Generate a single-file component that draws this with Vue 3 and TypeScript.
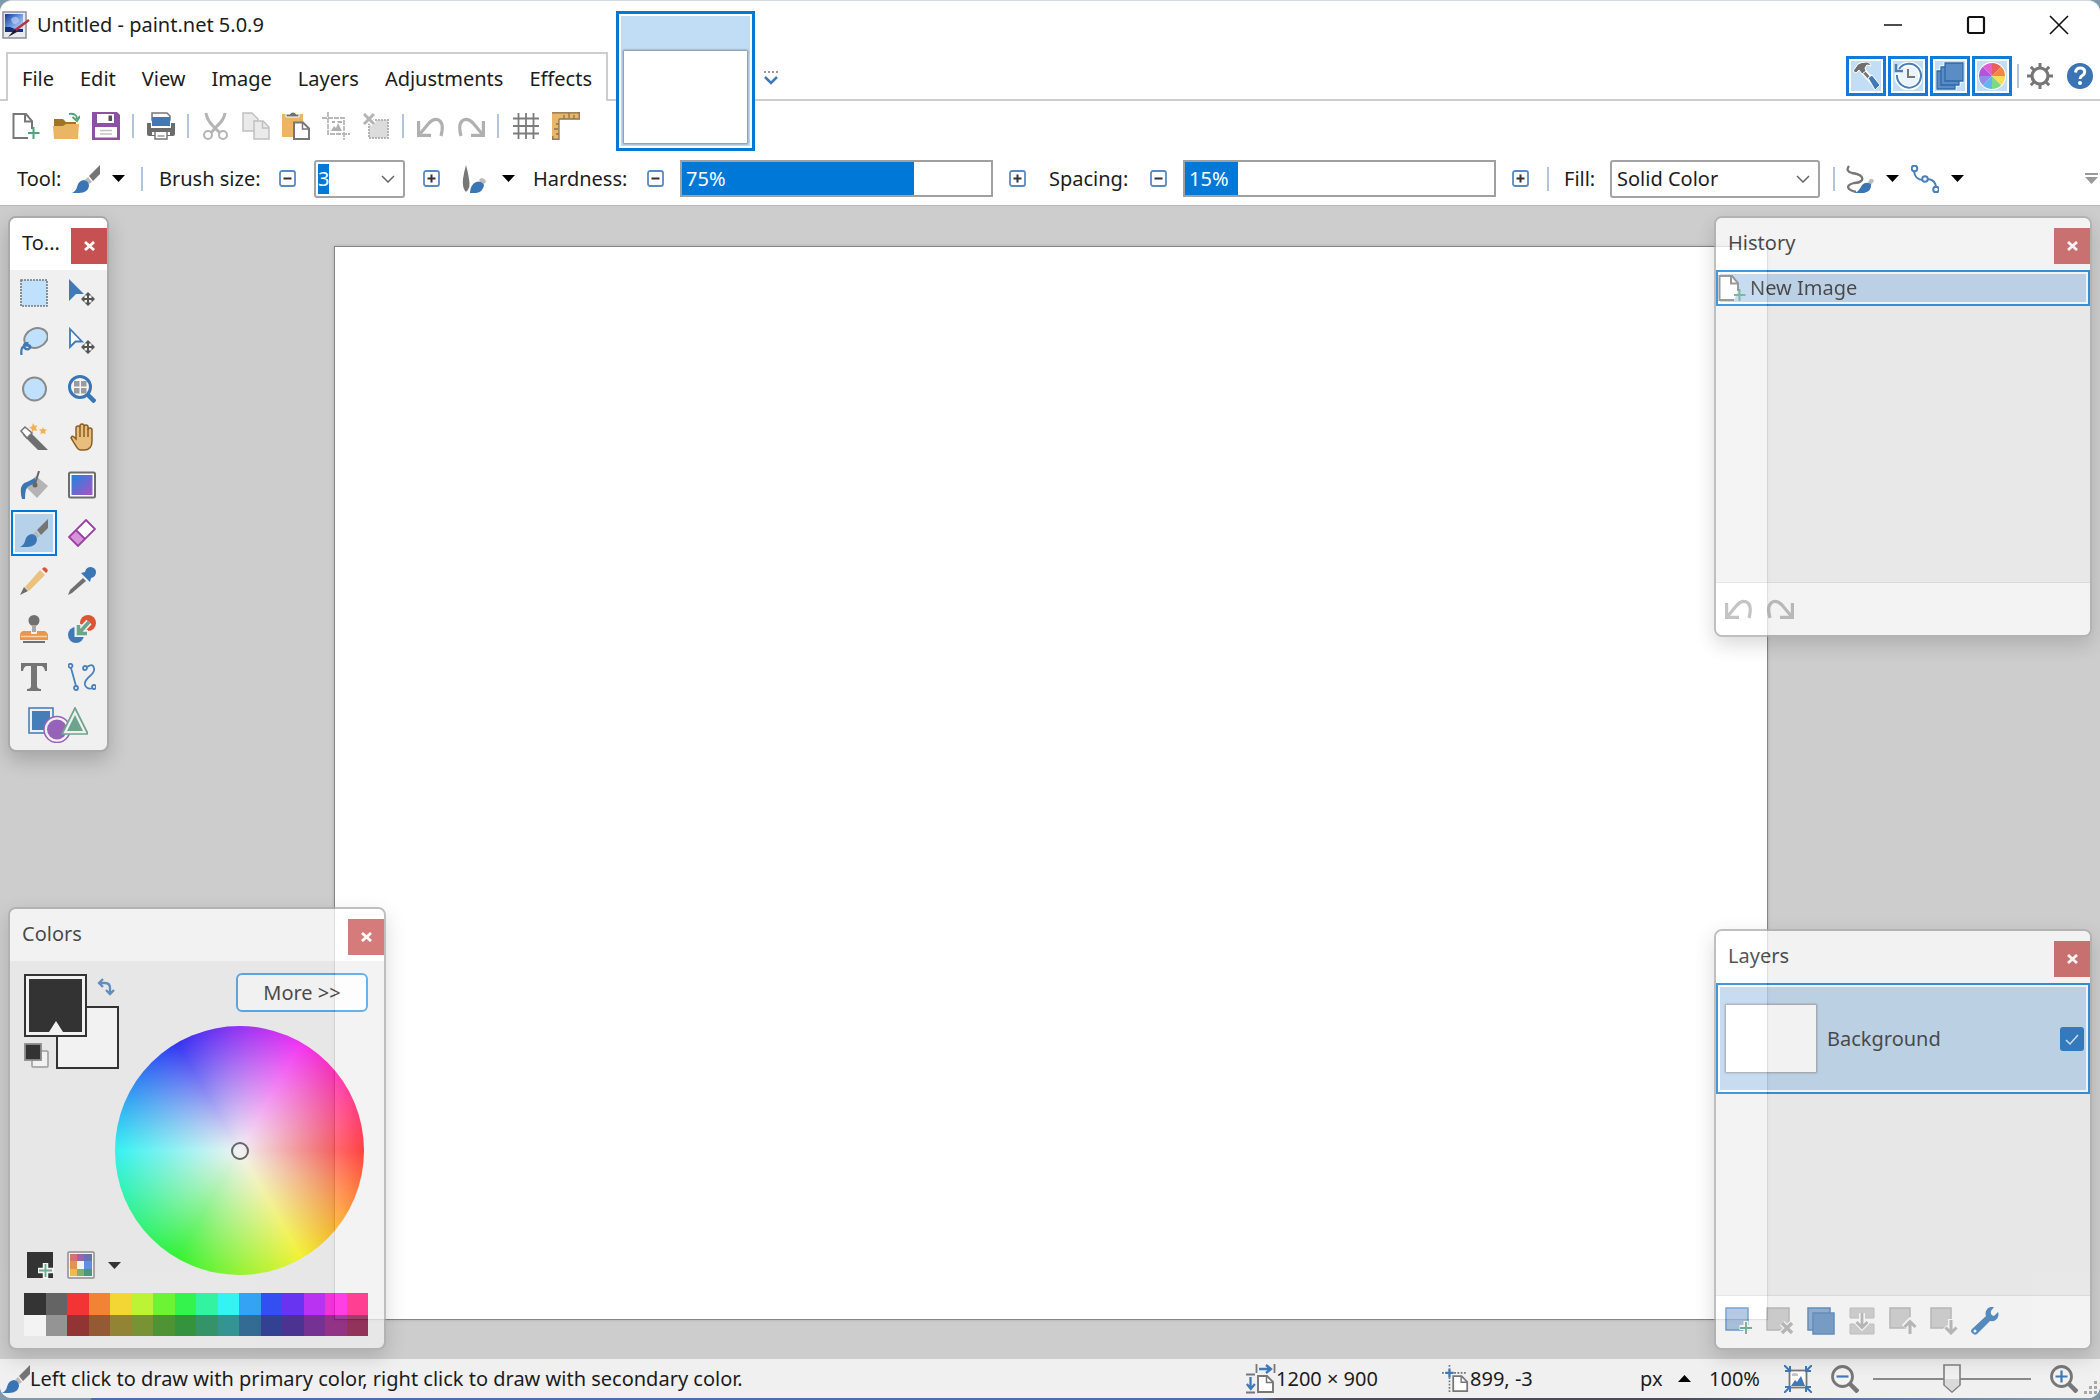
<script setup lang="ts">
import { onMounted, ref } from 'vue'

const menus = ['File', 'Edit', 'View', 'Image', 'Layers', 'Adjustments', 'Effects']

interface Action { icon: string; label: string }

const toolbarGroups: Action[][] = [
  [{ icon: 'new', label: 'New' }, { icon: 'open', label: 'Open' }, { icon: 'save', label: 'Save' }],
  [{ icon: 'print', label: 'Print' }],
  [
    { icon: 'cut', label: 'Cut' },
    { icon: 'copy', label: 'Copy' },
    { icon: 'paste', label: 'Paste' },
    { icon: 'crop', label: 'Crop to Selection' },
    { icon: 'deselect', label: 'Deselect' },
  ],
  [{ icon: 'undo', label: 'Undo' }, { icon: 'redo', label: 'Redo' }],
  [{ icon: 'grid', label: 'Pixel Grid' }, { icon: 'ruler', label: 'Rulers' }],
]

const windowToggles: Action[] = [
  { icon: 'hammer', label: 'Tools window' },
  { icon: 'clock', label: 'History window' },
  { icon: 'stack', label: 'Layers window' },
  { icon: 'wheel', label: 'Colors window' },
]

const tools: Action[] = [
  { icon: 'rect-select', label: 'Rectangle Select' },
  { icon: 'move-pixels', label: 'Move Selected Pixels' },
  { icon: 'lasso', label: 'Lasso Select' },
  { icon: 'move-selection', label: 'Move Selection' },
  { icon: 'ellipse-select', label: 'Ellipse Select' },
  { icon: 'zoom-tool', label: 'Zoom' },
  { icon: 'wand', label: 'Magic Wand' },
  { icon: 'pan', label: 'Pan' },
  { icon: 'bucket', label: 'Paint Bucket' },
  { icon: 'gradient', label: 'Gradient' },
  { icon: 'brush', label: 'Paintbrush' },
  { icon: 'eraser', label: 'Eraser' },
  { icon: 'pencil', label: 'Pencil' },
  { icon: 'picker', label: 'Color Picker' },
  { icon: 'stamp', label: 'Clone Stamp' },
  { icon: 'recolor', label: 'Recolor' },
  { icon: 'text', label: 'Text' },
  { icon: 'curve', label: 'Line / Curve' },
]
const activeTool = ref('brush')

const layerActions: Action[] = [
  { icon: 'layer-add', label: 'Add New Layer' },
  { icon: 'layer-delete', label: 'Delete Layer' },
  { icon: 'layer-duplicate', label: 'Duplicate Layer' },
  { icon: 'layer-merge', label: 'Merge Layer Down' },
  { icon: 'layer-up', label: 'Move Layer Up' },
  { icon: 'layer-down', label: 'Move Layer Down' },
  { icon: 'wrench', label: 'Properties' },
]

const palette = [
  '#000000', '#404040', '#ff0000', '#ff6a00', '#ffd800', '#b6ff00', '#4cff00', '#00ff21',
  '#00ff90', '#00ffff', '#0094ff', '#0026ff', '#4800ff', '#b200ff', '#ff00dc', '#ff006e',
  '#ffffff', '#808080', '#7f0000', '#7f3300', '#7f6a00', '#5b7f00', '#267f00', '#007f0e',
  '#007f46', '#007f7f', '#004a7f', '#00137f', '#21007f', '#57007f', '#7f006e', '#7f0037',
]

const brushSize = ref('3')
const hardness = ref(75)
const spacing = ref(15)
const zoom = ref(50)
const layerVisible = ref(true)
const sizeInput = ref<HTMLInputElement | null>(null)

onMounted(() => {
  sizeInput.value?.focus()
  sizeInput.value?.select()
})
</script>

<template>
  <svg class="sprite" width="0" height="0" aria-hidden="true">
    <defs>
      <linearGradient id="g-tool" x1="0" y1="0" x2="1" y2="1">
        <stop offset="0" stop-color="#1b86e0" /><stop offset="1" stop-color="#b04fc4" />
      </linearGradient>
      <linearGradient id="g-app" x1="0" y1="0" x2="1" y2="1">
        <stop offset="0" stop-color="#123a9c" /><stop offset=".5" stop-color="#6f9be0" /><stop offset="1" stop-color="#dfe9fa" />
      </linearGradient>
    </defs>

    <symbol id="i-app" viewBox="0 0 28 28">
      <rect x="1" y="1" width="23" height="26" fill="#e9eaf0" stroke="#8d8d98" stroke-width="1.5" />
      <rect x="3" y="3" width="18" height="18" fill="url(#g-app)" />
      <path d="M9 8q4-4 7-1t-2 6q-4 1-5-5z" fill="#c3d9f5" opacity=".6" />
      <path d="M3 16h5l5 2h8v3H3z" fill="#16307c" />
      <path d="M27 9 12 20" stroke="#b3343f" stroke-width="2.4" />
      <path d="M13 18 6 26l9-5z" fill="#1d1d28" />
    </symbol>

    <symbol id="i-new" viewBox="0 0 28 28">
      <path d="M16 26H1.500V2H14l6 7v8" fill="#fff" stroke="#777" stroke-width="2" />
      <path d="M13 2v7.500h7" fill="none" stroke="#777" stroke-width="2" />
      <path d="M21.500 15v12M16 21h11.500" stroke="#4da37c" stroke-width="2" />
    </symbol>
    <symbol id="i-open" viewBox="0 0 28 28">
      <path d="M2 7h9l3 3h10v7H2z" fill="#a07427" />
      <path d="M1 14h10l3-2h13l-1 15H2z" fill="#ebb663" />
      <path d="M17 2q8-1 8 5M20.500 5l4.500 4 3-5" fill="none" stroke="#4da37c" stroke-width="2" />
    </symbol>
    <symbol id="i-save" viewBox="0 0 28 28">
      <path d="M0 0h25l3 3v25H0z" fill="#8c50a4" />
      <path d="M5 2h17v9H5zM3 15h22v10.500H3z" fill="#fff" />
      <rect x="16.500" y="3.500" width="3.500" height="5.500" fill="#555" />
      <path d="M8 18.500h12M8 22h12" stroke="#c4c4c4" stroke-width="1.500" />
    </symbol>
    <symbol id="i-print" viewBox="0 0 28 28">
      <path d="M6 1h14l3 3v4H5V1z" fill="#fff" stroke="#777" stroke-width="1.500" />
      <rect x="5" y="5" width="18" height="9" fill="#3f79b7" />
      <path d="M0 11h4v5h20v-5h4v11q0 2-2 2H2q-2 0-2-2z" fill="#6c6c6c" />
      <rect x="5" y="20" width="18" height="3" fill="#fff" />
      <path d="M8 20v7h12v-7" fill="#fff" stroke="#777" stroke-width="1.500" />
      <path d="M10.500 24h7" stroke="#999" stroke-width="1.500" />
    </symbol>
    <symbol id="i-cut" viewBox="0 0 28 28">
      <path d="M4 1q1 7 7 13l8 8M23 1q-1 7-8 13l-7 8" fill="none" stroke="#b4b4b4" stroke-width="3" />
      <circle cx="6" cy="23" r="4" fill="#fff" stroke="#b4b4b4" stroke-width="2" />
      <circle cx="21" cy="23" r="4" fill="#fff" stroke="#b4b4b4" stroke-width="2" />
    </symbol>
    <symbol id="i-copy" viewBox="0 0 28 28">
      <path d="M1 1h9l6 6v12H1z" fill="#eaeaea" stroke="#c0c0c0" stroke-width="1.500" />
      <path d="M12 9h9l6 6v12H12z" fill="#eaeaea" stroke="#c0c0c0" stroke-width="1.500" />
      <path d="M20.500 9v7H27" fill="none" stroke="#c0c0c0" stroke-width="1.500" />
    </symbol>
    <symbol id="i-paste" viewBox="0 0 28 28">
      <path d="M0 2h21v23H0z" fill="#ebb663" />
      <path d="M4 5V2h4q0-2 3-2t3 2h3v3z" fill="#707070" stroke="#fff" />
      <path d="M12 10.500h9l6 6V27H12z" fill="#fff" stroke="#777" stroke-width="2" />
      <path d="M20.500 11v6H27" fill="none" stroke="#777" stroke-width="1.500" />
    </symbol>
    <symbol id="i-crop" viewBox="0 0 28 28">
      <path d="M6 0v22h22M0 6h22v22" fill="none" stroke="#b8b8b8" stroke-width="1.800" stroke-dasharray="5 1" />
      <path d="M9 19l3-5 2 2 2-5 4 8zM10 9h3v2h-3zM15 9h5v2h-4z" fill="#b0b0b0" />
    </symbol>
    <symbol id="i-deselect" viewBox="0 0 28 28">
      <rect x="7" y="8" width="19" height="18" fill="#dcdcdc" stroke="#b4b4b4" stroke-width="2" stroke-dasharray="2 1" />
      <path d="M2 2l10 10M12 2 2 12" stroke="#fff" stroke-width="6" />
      <path d="M2 2l10 10M12 2 2 12" stroke="#b4b4b4" stroke-width="3" />
    </symbol>
    <symbol id="i-undo" viewBox="0 0 28 28">
      <path d="M2 23 12 11q6-6 11-2 4 4 1 15" fill="none" stroke="#b0b0b0" stroke-width="3.200" />
      <path d="M1.600 9v14.400H14" fill="none" stroke="#b0b0b0" stroke-width="3.200" />
    </symbol>
    <symbol id="i-redo" viewBox="0 0 28 28">
      <path d="M26 23 16 11q-6-6-11-2-4 4-1 15" fill="none" stroke="#b0b0b0" stroke-width="3.200" />
      <path d="M26.400 9v14.400H14" fill="none" stroke="#b0b0b0" stroke-width="3.200" />
    </symbol>
    <symbol id="i-grid" viewBox="0 0 28 28">
      <path d="M6.500 1v26M14 1v26M21.500 1v26M1 6.500h26M1 14h26M1 21.500h26" stroke="#7c7c7c" stroke-width="1.800" />
    </symbol>
    <symbol id="i-ruler" viewBox="0 0 28 28">
      <path d="M0 0h28v7H7v21H0z" fill="#e9b569" />
      <path d="M0 .8h28M27.200 0v6M22 3v4M17 1v5M12 3v4M7 7h21M7 7v21M0 27.200h7M4 22h3M2 17h4M4 12h3M.8 24v4" stroke="#8b744e" stroke-width="1.300" fill="none" />
    </symbol>

    <symbol id="i-hammer" viewBox="0 0 28 28">
      <path d="M11 9l10 11" stroke="#fff" stroke-width="6" /><path d="M10 8l9 10" stroke="#777" stroke-width="3" />
      <path d="M1 9 6 2Q9 0 15 0q3 0 4 4l-4-1-2 3 1 3-4 3-3-4-3 3z" fill="#6f6f6f" stroke="#fff" />
      <path d="M16 16l4-3 8 10-5 5z" fill="#3f79b7" stroke="#fff" />
    </symbol>
    <symbol id="i-clock" viewBox="0 0 28 28">
      <circle cx="15" cy="14" r="12" fill="#eaf4fd" stroke="#fff" stroke-width="5" />
      <path d="M5 7a12 12 0 1 1-2 6" fill="none" stroke="#4a7fba" stroke-width="2" />
      <path d="M2 2v7h7" fill="none" stroke="#4a7fba" stroke-width="2.500" />
      <path d="M14 7v8h7" fill="none" stroke="#777" stroke-width="2" />
    </symbol>
    <symbol id="i-stack" viewBox="0 0 28 28">
      <g fill="#4f84bf" stroke="#fff" stroke-width="3"><path d="M9 1h18v18H9z" /><path d="M5 5h18v18H5z" /><path d="M1 9h18v18H1z" /></g>
      <g fill="#5a8dc6" stroke="#2f68a8" stroke-width="1.300"><path d="M1 9h18v18H1z" /><path d="M5 5h18v18H5z" /><path d="M9 1h18v18H9z" /></g>
    </symbol>
    <symbol id="i-wheel" viewBox="0 0 28 28">
      <circle cx="14" cy="14" r="14" fill="#fff" />
      <path d="M14 14V1a13 13 0 0 1 9.200 3.800z" fill="#e9605a" />
      <path d="M14 14l9.200-9.200A13 13 0 0 1 27 14z" fill="#f08a41" />
      <path d="M14 14h13a13 13 0 0 1-3.800 9.200z" fill="#fddc5c" />
      <path d="M14 14l9.200 9.200A13 13 0 0 1 14 27z" fill="#7fd884" />
      <path d="M14 14v13a13 13 0 0 1-9.200-3.800z" fill="#63b5f2" />
      <path d="M14 14l-9.200 9.200A13 13 0 0 1 1 14z" fill="#8f8de9" />
      <path d="M14 14H1a13 13 0 0 1 3.800-9.200z" fill="#b355dc" />
      <path d="M14 14 4.800 4.800A13 13 0 0 1 14 1z" fill="#df5fd9" />
    </symbol>
    <symbol id="i-gear" viewBox="0 0 28 28">
      <circle cx="14" cy="14" r="8" fill="none" stroke="#777" stroke-width="3.200" />
      <path d="M14 1v5M14 22v5M1 14h5M22 14h5M4.800 4.800 8.500 8.500M19.500 19.500l3.700 3.700M23.200 4.800 19.500 8.500M8.500 19.500l-3.700 3.700" stroke="#777" stroke-width="3" />
    </symbol>
    <symbol id="i-help" viewBox="0 0 28 28">
      <circle cx="14" cy="14" r="13" fill="#3a74b4" />
      <path d="M9.500 10.500q.5-4.500 4.700-4.500 4.500 0 4.500 4 0 2-2.400 3.500-2.300 1.300-2.300 3.500" fill="none" stroke="#fff" stroke-width="3" />
      <circle cx="14" cy="21" r="2" fill="#fff" />
    </symbol>

    <symbol id="i-brush" viewBox="0 0 28 28">
      <path d="M28 0v9l-7 7-4-5z" fill="#757575" />
      <path d="M16 12l4 5-3 2-4-4z" fill="#b9b9b9" />
      <path d="M12 15q5 1 5 6-1 7-10 7H0q4-2 5-6 1-6 7-7z" fill="#3a76b5" />
    </symbol>
    <symbol id="i-brush-soft" viewBox="0 0 28 28">
      <path d="M4 0q2 7 3 14 2 9-3 13-4-4-3-13 1-7 3-14z" fill="#777" />
      <path d="M19 13q4 0 5 4l-3 3-4-5z" fill="#bdbdbd" />
      <path d="M8 28q0-8 6-11 5-2 8 3-1 7-8 8z" fill="#3a76b5" />
    </symbol>
    <symbol id="i-brush-stroke" viewBox="0 0 28 28">
      <path d="M3 1q-4 5 3 7 12 2 10 7-2 3-8 3-8 2-5 6 2 2 7 3" fill="none" stroke="#777" stroke-width="2.300" />
      <path d="M24 14q3-1 4 2l-3 4-3-3z" fill="#bdbdbd" />
      <path d="M9 28q5-3 7-8 4-4 9-1 1 7-7 9z" fill="#3a76b5" />
    </symbol>
    <symbol id="i-curve-nodes" viewBox="0 0 28 28">
      <g fill="none" stroke="#4a80bb" stroke-width="2"><path d="M3 6q1 9 9 9M17 14q8 1 8 9" /><circle cx="3.500" cy="3.500" r="2.800" /><circle cx="14" cy="14" r="2.800" /><circle cx="25" cy="24.500" r="2.800" /></g>
    </symbol>

    <symbol id="i-rect-select" viewBox="0 0 28 28"><rect x="1" y="1" width="26" height="26" fill="#bfe1fd" stroke="#777" stroke-width="1.600" stroke-dasharray="2 1" /></symbol>
    <symbol id="i-move-pixels" viewBox="0 0 28 28">
      <path d="M1 0l15 15H8l-7 7z" fill="#4079b8" />
      <path d="M20 14v12M14 20h12" stroke="#555" stroke-width="2" />
      <path d="M20 13l3.500 3.500h-7zM20 27l-3.500-3.500h7zM13 20l3.500-3.500v7zM27 20l-3.500 3.500v-7z" fill="#555" />
    </symbol>
    <symbol id="i-move-selection" viewBox="0 0 28 28">
      <path d="M2 2l12 12.500H7.500L2 20z" fill="#fff" stroke="#4079b8" stroke-width="1.800" />
      <path d="M20 14v12M14 20h12" stroke="#555" stroke-width="2" />
      <path d="M20 13l3.500 3.500h-7zM20 27l-3.500-3.500h7zM13 20l3.500-3.500v7zM27 20l-3.500 3.500v-7z" fill="#555" />
    </symbol>
    <symbol id="i-lasso" viewBox="0 0 28 28">
      <ellipse cx="16" cy="11" rx="12" ry="9.500" transform="rotate(-22 16 11)" fill="#bfe1fd" stroke="#8a8a8a" stroke-width="2" />
      <path d="M1.500 28q-1-8 3-9 5-2 6 1-2 4-6 1-2-5 4-5" fill="none" stroke="#3f79b7" stroke-width="2.300" />
    </symbol>
    <symbol id="i-ellipse-select" viewBox="0 0 28 28"><circle cx="14.500" cy="14" r="11.500" fill="#bfe1fd" stroke="#8a8a8a" stroke-width="2" /></symbol>
    <symbol id="i-zoom-tool" viewBox="0 0 28 28">
      <circle cx="12" cy="12" r="10.500" fill="#f4f4f4" stroke="#3a76b5" stroke-width="3" />
      <path d="M6 6h5.500v5.500H6zM13 6h5.500v5.500H13zM6 13h5.500v5.500H6zM13 13h5.500v5.500H13z" fill="#9b9b9b" />
      <path d="M19 19l8 8" stroke="#3a76b5" stroke-width="4.500" />
    </symbol>
    <symbol id="i-wand" viewBox="0 0 28 28">
      <path d="M9 8l19 19H18L3 12z" fill="#6f6f6f" />
      <path d="M1 8l4-4 7 6-5 5z" fill="#fff" stroke="#777" stroke-width="1.600" />
      <path d="M13 0l1.500 2.800 3-.3-1.600 2.600 1.400 2.900-3-.8-2.400 2-.2-3.200-2.600-1.600 3-1.200zM23 4l1 2.300 3 0-2 2.100.6 2.800-2.600-1.300-2.600 1.300.6-2.800-2-2.100 3 0z" fill="#efb354" />
    </symbol>
    <symbol id="i-pan" viewBox="0 0 28 28">
      <path d="M8 16V5q0-2 2-2t2 2v-2q0-2 2-2t2 2v1q0-2 2-2t2 2v3q0-2 2-2t2 2v11q0 9-8 9h-3q-3 0-5-4l-5-8q1-3 3-1z" fill="#e9bd7c" stroke="#8a5f24" stroke-width="1.500" />
      <path d="M12 5v9M16 4v10M20 6v8" stroke="#8a5f24" stroke-width="1.500" />
    </symbol>
    <symbol id="i-bucket" viewBox="0 0 28 28">
      <path d="M16 5l12 10-11 12L5 15z" fill="#b4b4b4" />
      <path d="M2 28Q-2 13 7 11l8-4v5l-6 3q-4 1-4 13z" fill="#3a76b5" />
      <path d="M19 0l-4 13" stroke="#666" stroke-width="2" fill="none" /><circle cx="15" cy="14" r="2.500" fill="#666" />
    </symbol>
    <symbol id="i-gradient" viewBox="0 0 28 28">
      <rect x="1" y="1.500" width="26" height="25" rx="1.500" fill="#fff" stroke="#6d6d6d" stroke-width="2" /><rect x="3.500" y="4" width="21" height="20" fill="url(#g-tool)" />
    </symbol>
    <symbol id="i-eraser" viewBox="0 0 28 28">
      <path d="M18 1l9 9-17 17-9-9z" fill="#fff" /><path d="M8 11l9 9-7 7-9-9z" fill="#d693dc" />
      <path d="M18 1l9 9-17 17-9-9zM8 11l9 9" fill="none" stroke="#9c3fa5" stroke-width="1.800" />
    </symbol>
    <symbol id="i-pencil" viewBox="0 0 28 28">
      <path d="M20 3l5 5L9 24l-4-4z" fill="#eac17d" /><path d="M22 2q2-3 4-1 3 2 1 4l-1 1z" fill="#dd5134" /><path d="M4 20l4 4-8 4z" fill="#6b6b6b" />
    </symbol>
    <symbol id="i-picker" viewBox="0 0 28 28">
      <path d="M15 11l3 3L4 26l-4 2 2-5z" fill="#6f6f6f" />
      <path d="M13 6l4-1q1-5 6-5 5 1 5 5 0 5-5 6l-1 4z" fill="#3a76b5" />
    </symbol>
    <symbol id="i-stamp" viewBox="0 0 28 28">
      <circle cx="14" cy="5.500" r="5.500" fill="#707070" /><path d="M12 10h4v7h-4z" fill="#a8a8a8" />
      <path d="M3 16h8v3h6v-3h8q3 2 3 4v5H0v-5q0-3 3-4z" fill="#ea944c" /><path d="M1 21.500h26" stroke="#f9d2ac" stroke-width="1.500" /><path d="M3 27h22" stroke="#707070" stroke-width="2" />
    </symbol>
    <symbol id="i-recolor" viewBox="0 0 28 28">
      <circle cx="20" cy="8" r="8" fill="#dd5434" /><circle cx="8" cy="20" r="8" fill="#3f79b7" />
      <path d="M21 7 11 18M10 9v9.500h10" fill="none" stroke="#f0f0f0" stroke-width="7" />
      <path d="M21 7 11 18M10.500 10v8.500H19" fill="none" stroke="#6da58c" stroke-width="3.500" />
    </symbol>
    <symbol id="i-text" viewBox="0 0 28 28"><path d="M1 0h26v8h-2q-1-5-4-5h-4v20q0 3 4 3v2H7v-2q4 0 4-3V3H7Q4 3 3 8H1z" fill="#757575" /></symbol>
    <symbol id="i-curve" viewBox="0 0 28 28">
      <g fill="none" stroke="#4a80bb" stroke-width="1.800"><path d="M3 5l5 18M19 4q6-4 7 1 1 4-4 8-6 5-5 9 2 5 8 3" /><circle cx="2.500" cy="2.800" r="2" /><circle cx="8" cy="25" r="2" /><circle cx="17" cy="5" r="2" /><circle cx="26" cy="24" r="2" /></g>
    </symbol>
    <symbol id="i-shapes" viewBox="0 0 60 36">
      <rect x="1" y="1" width="24" height="25" fill="#f0f0f0" stroke="#3f79b7" stroke-width="1.500" /><rect x="4" y="4" width="18" height="19" fill="#457db9" />
      <circle cx="29" cy="22.500" r="13" fill="#f0f0f0" stroke="#9763b8" stroke-width="1.500" /><circle cx="29" cy="22.500" r="10" fill="#9763b8" />
      <path d="M47 1 60 27H34z" fill="#f0f0f0" stroke="#6da58c" stroke-width="1.700" /><path d="M47 8l8 16H39z" fill="#6da58c" />
    </symbol>

    <symbol id="i-layer-add" viewBox="0 0 28 28"><rect x="1" y="1" width="22" height="22" fill="#9bb9dc" stroke="#4f87c2" stroke-width="1.500" /><path d="M21 14v13M14.500 20.500h13" stroke="#fff" stroke-width="5" /><path d="M21 15v12M15 21h12" stroke="#4da37c" stroke-width="1.800" /></symbol>
    <symbol id="i-layer-delete" viewBox="0 0 28 28"><rect x="1" y="1" width="22" height="22" fill="#c9c9c9" stroke="#b0b0b0" stroke-width="1.500" /><path d="M16 16l10 10M26 16 16 26" stroke="#fff" stroke-width="6" /><path d="M16 16l10 10M26 16 16 26" stroke="#adadad" stroke-width="3.500" /></symbol>
    <symbol id="i-layer-duplicate" viewBox="0 0 28 28"><rect x="1" y="1" width="22" height="22" fill="#7ba0ce" stroke="#3f79b7" stroke-width="1.500" /><rect x="6" y="6" width="21" height="21" fill="#5c8bc0" stroke="#3f79b7" stroke-width="1.500" /></symbol>
    <symbol id="i-layer-merge" viewBox="0 0 28 28"><path d="M2 1h24v10H2zM2 17h24v10H2z" fill="#c9c9c9" stroke="#b8b8b8" /><path d="M14 6v14M8 14l6 6 6-6" fill="none" stroke="#fff" stroke-width="6" /><path d="M14 6v14M8.500 15l5.500 5.500 5.500-5.500" fill="none" stroke="#adadad" stroke-width="2.700" /></symbol>
    <symbol id="i-layer-up" viewBox="0 0 28 28"><rect x="1" y="1" width="20" height="20" fill="#c9c9c9" stroke="#b0b0b0" stroke-width="1.500" /><path d="M21 28V15M15 20l6-6 6 6" fill="none" stroke="#fff" stroke-width="6" /><path d="M21 27V15M15.500 20l5.500-5.500 5.500 5.500" fill="none" stroke="#adadad" stroke-width="3" /></symbol>
    <symbol id="i-layer-down" viewBox="0 0 28 28"><rect x="1" y="1" width="20" height="20" fill="#c9c9c9" stroke="#b0b0b0" stroke-width="1.500" /><path d="M21 12v14M15 20l6 6 6-6" fill="none" stroke="#fff" stroke-width="6" /><path d="M21 13v12M15.500 20.500l5.500 5.500 5.500-5.500" fill="none" stroke="#adadad" stroke-width="3" /></symbol>
    <symbol id="i-wrench" viewBox="0 0 28 28">
      <path d="M23 0q-6-1-8 4-1 3 0 5L1 22q-2 2 0 4 3 3 5 1l13-13q6 1 8-4 1-3 0-5l-4 4q-4-1-3-5z" fill="#2f74b8" /><circle cx="4" cy="24" r="1.500" fill="#fff" />
    </symbol>

    <symbol id="i-resize" viewBox="0 0 30 30">
      <path d="M10.500 0v9M28.500 0v9M0 10.500h9M0 28.500h9" stroke="#777" stroke-width="1.800" />
      <path d="M13 5h12M20 1l5 4-5 4M4.500 13v12M.8 20l4 5 4-5" fill="none" stroke="#3f79b7" stroke-width="2.300" />
      <path d="M12 12h9l6 6v10H12z" fill="#fff" stroke="#777" stroke-width="1.900" /><path d="M20.500 12v6.500H27" fill="none" stroke="#777" stroke-width="1.500" />
    </symbol>
    <symbol id="i-cursor" viewBox="0 0 30 30">
      <path d="M8 0v4M8 13v16M0 8.500h4M13 8.500h14" stroke="#777" stroke-width="1.800" stroke-dasharray="2 1.500" />
      <path d="M8 4v9M3.500 8.500h9" stroke="#3f79b7" stroke-width="2.500" />
      <path d="M12 12h9l6 6v10H12z" fill="#fff" stroke="#777" stroke-width="1.900" /><path d="M20.500 12v6.500H27" fill="none" stroke="#777" stroke-width="1.500" />
    </symbol>
    <symbol id="i-fit" viewBox="0 0 28 28">
      <rect x="5.500" y="5.500" width="17" height="17" fill="#fff" stroke="#777" stroke-width="1.800" />
      <path d="M7 21l4-6 2 2 4-6 4 10z" fill="#3f79b7" /><path d="M8 9q2-2 6 0v2H8z" fill="#c4c4c4" />
      <path d="M0 0l6 6M6 1v5H1M28 0l-6 6M22 1v5h5M0 28l6-6M1 22h5v5M28 28l-6-6M22 27v-5h5" stroke="#3f79b7" stroke-width="2" fill="none" />
    </symbol>
    <symbol id="i-zoom-out" viewBox="0 0 28 28"><circle cx="11.500" cy="11.500" r="10" fill="#f3f3f3" stroke="#777" stroke-width="2.800" /><path d="M18 18l9 9" stroke="#777" stroke-width="4.500" /><path d="M5.500 11.500h12" stroke="#3f79b7" stroke-width="2.200" /></symbol>
    <symbol id="i-zoom-in" viewBox="0 0 28 28"><circle cx="11.500" cy="11.500" r="10" fill="#f3f3f3" stroke="#777" stroke-width="2.800" /><path d="M18 18l9 9" stroke="#777" stroke-width="4.500" /><path d="M5.500 11.500h12M11.500 5.500v12" stroke="#3f79b7" stroke-width="2.200" /></symbol>

    <symbol id="i-minus" viewBox="0 0 17 17"><rect x="1" y="1" width="15" height="15" rx="2" fill="#fbfdff" stroke="#5a8ac2" stroke-width="1.800" /><path d="M4.500 8.500h8" stroke="#333" stroke-width="2" /></symbol>
    <symbol id="i-plus" viewBox="0 0 17 17"><rect x="1" y="1" width="15" height="15" rx="2" fill="#fbfdff" stroke="#5a8ac2" stroke-width="1.800" /><path d="M4.500 8.500h8M8.500 4.500v8" stroke="#333" stroke-width="2" /></symbol>
    <symbol id="i-caret" viewBox="0 0 13 7"><path d="M0 0h13L6.500 7z" fill="#000" /></symbol>
    <symbol id="i-caret-up" viewBox="0 0 13 7"><path d="M0 7h13L6.500 0z" fill="#000" /></symbol>
    <symbol id="i-chevron" viewBox="0 0 14 8"><path d="M1 1l6 6 6-6" fill="none" stroke="#666" stroke-width="1.500" /></symbol>
    <symbol id="i-x" viewBox="0 0 11 10"><path d="M1 1l9 8M10 1 1 9" stroke="#fff" stroke-width="2.800" /></symbol>

    <symbol id="i-swap" viewBox="0 0 18 18"><path d="M2 5h6q5 0 5 5v5M6 1 2 5l4 4M9 12l4 4 4-4" fill="none" stroke="#3f79b7" stroke-width="2.300" /></symbol>
    <symbol id="i-reset" viewBox="0 0 26 26"><rect x="8" y="8" width="16" height="16" rx="1" fill="#fff" stroke="#8a8a8a" stroke-width="1.500" /><rect x="1" y="1" width="16" height="16" fill="#000" stroke="#777" stroke-width="1.800" /></symbol>
    <symbol id="i-swatch-add" viewBox="0 0 28 28"><path d="M1 1h26v26H1z" fill="#000" /><path d="M19.500 12v16M12 19.500h16" stroke="#fff" stroke-width="5.500" /><path d="M19.500 13v13M13 19.500h13" stroke="#4da37c" stroke-width="1.800" /></symbol>
    <symbol id="i-palette" viewBox="0 0 28 28">
      <rect x="1" y="1" width="26" height="26" rx="1" fill="#fff" stroke="#777" stroke-width="1.500" />
      <path d="M3 3h7v7H3z" fill="#d9534c" /><path d="M10 3h7v7h-7z" fill="#8b429c" /><path d="M17 3h8v7h-8z" fill="#4b51a5" />
      <path d="M3 10h7v8H3z" fill="#e5812a" /><path d="M17 10h8v8h-8z" fill="#3f79e5" />
      <path d="M3 18h7v7H3z" fill="#f4b32a" /><path d="M10 18h7v7h-7z" fill="#5daa4b" /><path d="M17 18h8v7h-8z" fill="#1d8368" />
    </symbol>
  </svg>

  <div class="desktop">
    <div class="window">
      <header class="top">
        <div class="titlebar">
          <svg class="icon app"><use href="#i-app" /></svg>
          <h1>Untitled - paint.net 5.0.9</h1>
          <div class="caption">
            <button type="button" aria-label="Minimize"><svg viewBox="0 0 20 20"><path d="M1 10h18" /></svg></button>
            <button type="button" aria-label="Maximize"><svg class="bold" viewBox="0 0 20 20"><rect x="2" y="2" width="16" height="16" rx="1.500" /></svg></button>
            <button type="button" aria-label="Close"><svg viewBox="0 0 20 20"><path d="M1 1l18 18M19 1 1 19" /></svg></button>
          </div>
        </div>

        <div class="menurow">
          <nav class="menubar">
            <button v-for="m in menus" :key="m" type="button">{{ m }}</button>
          </nav>
          <button type="button" class="doclist" aria-label="Image list">
            <svg viewBox="0 0 14 14"><path d="M0 1h14" stroke="#777" stroke-width="1.500" stroke-dasharray="2 2" /><path d="M1 6l6 6 6-6" fill="none" stroke="#3f79b7" stroke-width="2.500" /></svg>
          </button>
          <div class="toggles">
            <button v-for="w in windowToggles" :key="w.icon" type="button" :aria-label="w.label" class="toggle">
              <svg class="icon"><use :href="'#i-' + w.icon" /></svg>
            </button>
            <span class="sep" />
            <button type="button" class="plain" aria-label="Settings"><svg class="icon"><use href="#i-gear" /></svg></button>
            <button type="button" class="plain" aria-label="Help"><svg class="icon"><use href="#i-help" /></svg></button>
          </div>
        </div>
        <button type="button" class="docthumb" aria-label="Untitled"><span class="docfill"><span class="docpage" /></span></button>

        <div class="toolbar">
          <template v-for="(g, i) in toolbarGroups" :key="i">
            <span v-if="i > 0" class="sep" />
            <button v-for="a in g" :key="a.icon" type="button" :aria-label="a.label"><svg class="icon"><use :href="'#i-' + a.icon" /></svg></button>
          </template>
        </div>

        <div class="options">
          <span class="lab w-tool">Tool:</span>
          <button type="button" class="split" aria-label="Choose tool">
            <svg class="icon"><use href="#i-brush" /></svg><svg class="caret"><use href="#i-caret" /></svg>
          </button>
          <span class="sep" />
          <label class="lab w-size" for="size">Brush size:</label>
          <div class="stepper roomy">
            <button type="button" aria-label="Decrease brush size"><svg><use href="#i-minus" /></svg></button>
            <div class="combo">
              <input id="size" ref="sizeInput" v-model="brushSize" type="text" />
              <svg class="chev"><use href="#i-chevron" /></svg>
            </div>
            <button type="button" aria-label="Increase brush size"><svg><use href="#i-plus" /></svg></button>
          </div>
          <button type="button" class="split soft" aria-label="Brush hardness style">
            <svg class="icon"><use href="#i-brush-soft" /></svg><svg class="caret"><use href="#i-caret" /></svg>
          </button>
          <label class="lab w-hard" for="hard">Hardness:</label>
          <div class="stepper">
            <button type="button" aria-label="Decrease hardness"><svg><use href="#i-minus" /></svg></button>
            <div class="meter">
              <input id="hard" v-model.number="hardness" type="range" min="0" max="100" :style="{ '--fill': '75%' }" />
              <span>{{ hardness }}%</span>
            </div>
            <button type="button" aria-label="Increase hardness"><svg><use href="#i-plus" /></svg></button>
          </div>
          <label class="lab w-space" for="space">Spacing:</label>
          <div class="stepper">
            <button type="button" aria-label="Decrease spacing"><svg><use href="#i-minus" /></svg></button>
            <div class="meter">
              <input id="space" v-model.number="spacing" type="range" min="0" max="100" :style="{ '--fill': '17%' }" />
              <span>{{ spacing }}%</span>
            </div>
            <button type="button" aria-label="Increase spacing"><svg><use href="#i-plus" /></svg></button>
          </div>
          <span class="sep wide" />
          <label class="lab w-fill" for="fill">Fill:</label>
          <div class="combo fill">
            <select id="fill"><option>Solid Color</option></select>
            <svg class="chev"><use href="#i-chevron" /></svg>
          </div>
          <span class="sep near" />
          <button type="button" class="split" aria-label="Antialiasing">
            <svg class="icon"><use href="#i-brush-stroke" /></svg><svg class="caret"><use href="#i-caret" /></svg>
          </button>
          <button type="button" class="split second" aria-label="Blending">
            <svg class="icon"><use href="#i-curve-nodes" /></svg><svg class="caret"><use href="#i-caret" /></svg>
          </button>
          <svg class="overflow" viewBox="0 0 13 11"><path d="M0 1h13" stroke="#999" stroke-width="2" /><path d="M0 4h13L6.500 11z" fill="#999" /></svg>
        </div>
      </header>

      <main class="workspace">
        <div class="canvas" />

        <section class="panel tools">
          <div class="phead"><h2>To...</h2><button type="button" class="close" aria-label="Close Tools"><svg><use href="#i-x" /></svg></button></div>
          <div class="toolgrid">
            <button v-for="t in tools" :key="t.icon" type="button" :aria-label="t.label" :class="{ active: t.icon === activeTool }" @click="activeTool = t.icon">
              <svg class="icon"><use :href="'#i-' + t.icon" /></svg>
            </button>
            <button type="button" class="shapes" aria-label="Shapes"><svg><use href="#i-shapes" /></svg></button>
          </div>
        </section>

        <section class="panel faded history">
          <div class="phead"><h2>History</h2><button type="button" class="close" aria-label="Close History"><svg><use href="#i-x" /></svg></button></div>
          <div class="pbody">
            <div class="row hrow"><div class="rowfill"><svg class="icon"><use href="#i-new" /></svg><span>New Image</span></div></div>
          </div>
          <div class="pfoot">
            <button type="button" aria-label="Undo"><svg class="icon"><use href="#i-undo" /></svg></button>
            <button type="button" aria-label="Redo"><svg class="icon"><use href="#i-redo" /></svg></button>
          </div>
        </section>

        <section class="panel faded layers">
          <div class="phead"><h2>Layers</h2><button type="button" class="close" aria-label="Close Layers"><svg><use href="#i-x" /></svg></button></div>
          <div class="pbody">
            <div class="row lrow">
              <div class="rowfill">
                <span class="lthumb" />
                <label for="bg">Background</label>
                <input id="bg" v-model="layerVisible" type="checkbox" />
              </div>
            </div>
          </div>
          <div class="pfoot">
            <button v-for="a in layerActions" :key="a.icon" type="button" :aria-label="a.label"><svg class="icon"><use :href="'#i-' + a.icon" /></svg></button>
          </div>
        </section>

        <section class="panel faded colors">
          <div class="phead"><h2>Colors</h2><button type="button" class="close" aria-label="Close Colors"><svg><use href="#i-x" /></svg></button></div>
          <div class="cbody">
            <div class="ctop">
              <div class="wells">
                <button type="button" class="secondary" aria-label="Secondary color" />
                <button type="button" class="primary" aria-label="Primary color"><svg viewBox="0 0 14 11"><path d="M7 0l7 11H0z" fill="#fff" /></svg></button>
                <svg class="swap"><use href="#i-swap" /></svg>
                <svg class="reset"><use href="#i-reset" /></svg>
              </div>
              <button type="button" class="more">More &gt;&gt;</button>
            </div>
            <div class="cmid">
              <div class="cactions">
                <svg class="icon"><use href="#i-swatch-add" /></svg>
                <svg class="icon"><use href="#i-palette" /></svg>
                <svg class="caret"><use href="#i-caret" /></svg>
              </div>
              <div class="hue"><span /></div>
            </div>
            <div class="palette"><i v-for="c in palette" :key="c" :style="{ background: c }" /></div>
          </div>
        </section>
      </main>

      <footer class="status">
        <svg class="icon"><use href="#i-brush" /></svg>
        <span class="hint">Left click to draw with primary color, right click to draw with secondary color.</span>
        <span class="cell dims"><svg class="icon30"><use href="#i-resize" /></svg>1200 × 900</span>
        <span class="cell pos"><svg class="icon"><use href="#i-cursor" /></svg>899, -3</span>
        <button type="button" class="unit">px<svg class="caret"><use href="#i-caret-up" /></svg></button>
        <span class="pct">100%</span>
        <button type="button" aria-label="Zoom to window"><svg class="icon"><use href="#i-fit" /></svg></button>
        <button type="button" aria-label="Zoom out"><svg class="icon"><use href="#i-zoom-out" /></svg></button>
        <input v-model.number="zoom" class="zoom" type="range" min="0" max="100" aria-label="Zoom" />
        <button type="button" aria-label="Zoom in"><svg class="icon"><use href="#i-zoom-in" /></svg></button>
        <svg class="grip" viewBox="0 0 14 14"><path d="M10 0h3v3h-3zM5 5h3v3H5zM10 5h3v3h-3zM0 10h3v3H0zM5 10h3v3H5zM10 10h3v3h-3z" fill="#a8a8a8" /></svg>
      </footer>
    </div>
  </div>
</template>

<style>
body {
  background: #7c9bb3;
}
</style>

<style scoped>
* {
  box-sizing: border-box;
}
.sprite {
  position: absolute;
}
.desktop {
  display: flex;
  min-height: 100vh;
  padding-bottom: 2px;
  background: linear-gradient(90deg, #7f99ab 0, #7f99ab 90px, #4c6ea8 92px, #4c6ea8 60%, #4b4b55 61%, #4b4b55 80%, #5a76a3 88%, #7f99ab 98%);
  font: 20px/28px "Noto Sans", "Open Sans", sans-serif;
  color: #1c1c1c;
}
.window {
  flex: 1;
  display: flex;
  flex-direction: column;
  overflow: hidden;
  border-top: 1px solid #d5dbe0;
  border-radius: 12px;
  background: #fff;
}
button {
  display: flex;
  align-items: center;
  justify-content: center;
  padding: 0;
  border: 0;
  background: none;
  font: inherit;
  color: inherit;
}
svg {
  display: block;
  flex: none;
}
h1,
h2 {
  margin: 0;
  font: inherit;
}
.icon {
  width: 28px;
  height: 28px;
}
.icon30 {
  width: 30px;
  height: 30px;
}
.caret {
  width: 13px;
  height: 7px;
}
.sep {
  flex: none;
  width: 2px;
  height: 24px;
  background: #b3c5dd;
}

/* title bar and menu */
.top {
  position: relative;
  border-bottom: 1px solid #b8b8b8;
}
.titlebar {
  display: flex;
  align-items: center;
  gap: 7px;
  height: 51px;
  padding: 0 0 4px 2px;
}
.titlebar h1 {
  flex: 1;
}
.caption {
  display: flex;
}
.caption button {
  width: 83px;
  height: 46px;
}
.caption svg {
  width: 20px;
  height: 20px;
  fill: none;
  stroke: #111;
  stroke-width: 1.6;
}
.caption .bold {
  stroke-width: 2.2;
}
.menurow {
  display: flex;
  align-items: center;
  height: 49px;
  padding: 0 1px 0 6px;
  border-bottom: 2px solid #cdcdcd;
}
.menubar {
  display: flex;
  align-self: stretch;
  margin-bottom: -2px;
  padding: 0 1px;
  border: 2px solid #cdcdcd;
  border-bottom: 0;
  background: #fff;
}
.menubar button {
  padding: 2px 13px 0;
}
.doclist {
  margin-left: 155px;
  width: 16px;
  height: 24px;
  padding-top: 4px;
}
.doclist svg {
  width: 14px;
  height: 14px;
}
.toggles {
  display: flex;
  align-items: center;
  gap: 2px;
  margin-left: auto;
}
.toggle {
  width: 40px;
  height: 40px;
  border: 3px solid #0f7bdc;
  background: #c2def6;
  box-shadow: inset 0 0 0 2px #fff;
}
.toggles .sep {
  margin-left: 3px;
}
.plain {
  width: 38px;
  height: 40px;
}
.docthumb {
  position: absolute;
  left: 616px;
  top: 10px;
  width: 139px;
  height: 140px;
  padding: 2px;
  border: 3px solid #0078d7;
  background: #fff;
}
.docfill {
  display: flex;
  align-items: flex-end;
  width: 100%;
  height: 100%;
  padding: 3px;
  background: #c0ddf5;
}
.docpage {
  width: 100%;
  height: 92px;
  background: #fff;
  box-shadow: 0 0 2px 1px #7a8a98;
}

/* command toolbar */
.toolbar {
  display: flex;
  align-items: center;
  height: 51px;
  padding: 0 0 2px 6px;
}
.toolbar button {
  width: 40px;
  height: 40px;
}
.toolbar .sep {
  margin: 0 7px 0 6px;
}

/* tool options */
.options {
  display: flex;
  align-items: center;
  height: 53px;
  padding: 0 2px 0 17px;
}
.lab {
  flex: none;
}
.w-tool {
  width: 55px;
}
.w-size {
  width: 120px;
}
.w-hard {
  width: 114px;
}
.w-space {
  width: 101px;
}
.w-fill {
  width: 46px;
}
.split {
  gap: 12px;
}
.second {
  margin-left: 12px;
}
.soft {
  margin: 0 18px 0 22px;
}
.options .sep {
  margin: 0 16px;
}
.options .near {
  margin: 0 11px 0 13px;
}
.options .wide {
  margin: 0 15px 0 18px;
}
.stepper {
  display: flex;
  align-items: center;
  gap: 16px;
}
.stepper.roomy {
  gap: 18px;
}
.stepper + .lab {
  margin-left: 23px;
}
.stepper button,
.stepper button svg {
  width: 17px;
  height: 17px;
}
.combo {
  display: flex;
  align-items: center;
  width: 91px;
  height: 38px;
  padding: 0 8px 0 2px;
  border: 2px solid #a3a3a3;
  border-radius: 3px;
  background: #fff;
}
.combo input {
  flex: 1;
  min-width: 0;
  height: 30px;
  padding: 0;
  border: 0;
  outline: 0;
  background: none;
  font: inherit;
  line-height: 30px;
}
.combo input::selection {
  background: rgba(0, 120, 215, 0.996);
  color: #fff;
}
.combo.fill {
  width: 210px;
  padding-left: 5px;
}
.combo select {
  flex: 1;
  height: 34px;
  padding: 0;
  border: 0;
  outline: 0;
  appearance: none;
  background: none;
  font: inherit;
  color: inherit;
}
.chev {
  width: 14px;
  height: 8px;
}
.meter {
  position: relative;
  width: 313px;
  height: 37px;
}
.meter input {
  display: block;
  width: 100%;
  height: 100%;
  margin: 0;
  appearance: none;
  border: 2px solid #a0a0a0;
  background: linear-gradient(90deg, #0078d7 var(--fill), #fff var(--fill));
}
.meter input::-webkit-slider-thumb {
  appearance: none;
  width: 1px;
  height: 1px;
}
.meter span {
  position: absolute;
  left: 6px;
  top: 5px;
  color: #fff;
  pointer-events: none;
}
.overflow {
  width: 13px;
  height: 11px;
  margin-left: auto;
}

/* workspace */
.workspace {
  flex: 1;
  display: flex;
  position: relative;
  min-height: 1000px;
  padding: 40px 332px 39px 334px;
  background: #cdcdcd;
}
.canvas {
  flex: 1;
  border: 1px solid #858585;
  background: #fff;
  box-shadow: 0 0 3px #aaa;
}
.panel {
  position: absolute;
  display: flex;
  flex-direction: column;
  overflow: hidden;
  border: 2px solid #aaa;
  border-radius: 8px;
  background: #f0f0f0;
  box-shadow: 0 8px 20px rgba(0, 0, 0, 0.2);
}
.faded {
  opacity: 0.75;
}
.phead {
  display: flex;
  flex: none;
  align-items: center;
  justify-content: space-between;
  height: 52px;
  padding: 4px 0 0 12px;
  background: #fff;
}
.phead h2 {
  padding-bottom: 6px;
}
.close {
  width: 36px;
  height: 36px;
  background: #c75050;
}
.close svg {
  width: 11px;
  height: 10px;
}
.pbody {
  flex: 1;
}
.pfoot {
  display: flex;
  flex: none;
  gap: 13px;
  height: 53px;
  padding: 11px 9px 0;
  border-top: 1px solid #dedede;
  background: #fff;
}
.pfoot button {
  width: 28px;
  height: 28px;
}
.tools {
  left: 8px;
  top: 10px;
  width: 101px;
  height: 536px;
}
.toolgrid {
  display: grid;
  grid-template-columns: 48px 48px;
  grid-auto-rows: 48px;
  align-items: center;
  padding-left: 1px;
  margin-top: -1px;
}
.toolgrid button {
  width: 46px;
  height: 46px;
}
.toolgrid .active {
  border: 2px solid #0078d7;
  background: #b5d2ea;
  box-shadow: inset 0 0 0 2px #f4f8fc;
}
.toolgrid .shapes {
  grid-column: span 2;
  width: 94px;
}
.shapes svg {
  width: 60px;
  height: 36px;
}
.history {
  right: 8px;
  top: 10px;
  width: 378px;
  height: 421px;
}
.row {
  border: 2px solid #0078d7;
  padding: 2px;
  background: #fff;
}
.rowfill {
  display: flex;
  align-items: center;
  height: 100%;
  background: #b5d1eb;
}
.hrow {
  height: 36px;
}
.hrow .icon {
  margin: 0 4px 0 -2px;
}
.lrow {
  height: 111px;
}
.lrow .rowfill {
  padding: 0 2px 0 6px;
}
.lthumb {
  width: 90px;
  height: 67px;
  margin-right: 11px;
  background: #fff;
  box-shadow: 0 0 2px 1px #888;
}
.lrow label {
  flex: 1;
}
.lrow input {
  appearance: none;
  width: 24px;
  height: 24px;
  margin: 0;
  border-radius: 3px;
  background: #005fb8 url("data:image/svg+xml,%3Csvg xmlns='http://www.w3.org/2000/svg' viewBox='0 0 24 24'%3E%3Cpath d='M6 13l4 4 8-9' fill='none' stroke='%23cfe2f5' stroke-width='1.500'/%3E%3C/svg%3E") center / 24px;
}
.layers {
  right: 8px;
  bottom: 9px;
  width: 378px;
  height: 421px;
}

/* colors */
.colors {
  left: 8px;
  bottom: 9px;
  width: 378px;
  height: 443px;
}
.cbody {
  display: flex;
  flex: 1;
  flex-direction: column;
  padding: 12px 16px 0 14px;
}
.ctop {
  display: flex;
  align-items: flex-start;
  justify-content: space-between;
  height: 53px;
}
.wells {
  position: relative;
  z-index: 1;
  width: 96px;
  height: 96px;
}
.primary,
.secondary {
  position: absolute;
  width: 63px;
  height: 63px;
  border: 2px solid #000;
}
.primary {
  left: 0;
  top: 1px;
  align-items: flex-end;
  background: #000;
  box-shadow: inset 0 0 0 3px #fff;
  padding-bottom: 3px;
}
.primary svg {
  width: 14px;
  height: 11px;
}
.secondary {
  left: 32px;
  top: 33px;
  background: #fff;
}
.swap {
  position: absolute;
  left: 73px;
  top: 5px;
  width: 18px;
  height: 18px;
}
.reset {
  position: absolute;
  left: 0;
  top: 70px;
  width: 26px;
  height: 26px;
}
.more {
  width: 132px;
  height: 39px;
  border: 2px solid #3a97e2;
  border-radius: 6px;
  background: #fdfdfd;
}
.cmid {
  display: flex;
  align-items: flex-end;
  justify-content: space-between;
  height: 249px;
  padding-right: 4px;
}
.cactions {
  display: flex;
  align-items: center;
  gap: 13px;
  width: 91px;
  margin-bottom: -4px;
  padding-left: 2px;
}
.hue {
  display: flex;
  align-items: center;
  justify-content: center;
  flex: none;
  width: 249px;
  height: 249px;
  border-radius: 50%;
  background:
    radial-gradient(closest-side, #fff, rgba(255, 255, 255, 0)),
    conic-gradient(from 90deg, #f00, #ff0, #0f0, #0ff, #00f, #f0f, #f00);
}
.hue span {
  width: 18px;
  height: 18px;
  border: 2px solid #444;
  border-radius: 50%;
}
.palette {
  display: grid;
  grid-template-columns: repeat(16, 1fr);
  grid-template-rows: 1fr 1fr;
  height: 43px;
  margin-top: 18px;
}

/* status bar */
.status {
  display: flex;
  align-items: center;
  height: 39px;
  padding: 0 2px;
  background: #f0f0f0;
}
.hint {
  flex: 1;
  white-space: nowrap;
}
.cell {
  display: flex;
  align-items: center;
}
.dims {
  width: 196px;
}
.pos {
  width: 198px;
}
.unit {
  justify-content: space-between;
  width: 51px;
  margin-right: 18px;
}
.pct {
  width: 75px;
}
.status button + button {
  margin-left: 19px;
}
.zoom {
  width: 158px;
  height: 30px;
  margin: 0 19px 0 14px;
  appearance: none;
  background: linear-gradient(#8a8a8a, #8a8a8a) center / 100% 2px no-repeat;
}
.zoom::-webkit-slider-thumb {
  appearance: none;
  width: 18px;
  height: 29px;
  background: url("data:image/svg+xml,%3Csvg xmlns='http://www.w3.org/2000/svg' viewBox='0 0 18 29'%3E%3Cpath d='M1 1h16v20l-8 7-8-7z' fill='%23f0f0f0' stroke='%23808080' stroke-width='1.600'/%3E%3Cpath d='M2 15h14v6l-7 6-7-6z' fill='%23dadada'/%3E%3C/svg%3E") center / 18px 29px;
}
.grip {
  width: 14px;
  height: 14px;
  margin-left: 6px;
  align-self: flex-end;
  margin-bottom: 3px;
}
</style>
